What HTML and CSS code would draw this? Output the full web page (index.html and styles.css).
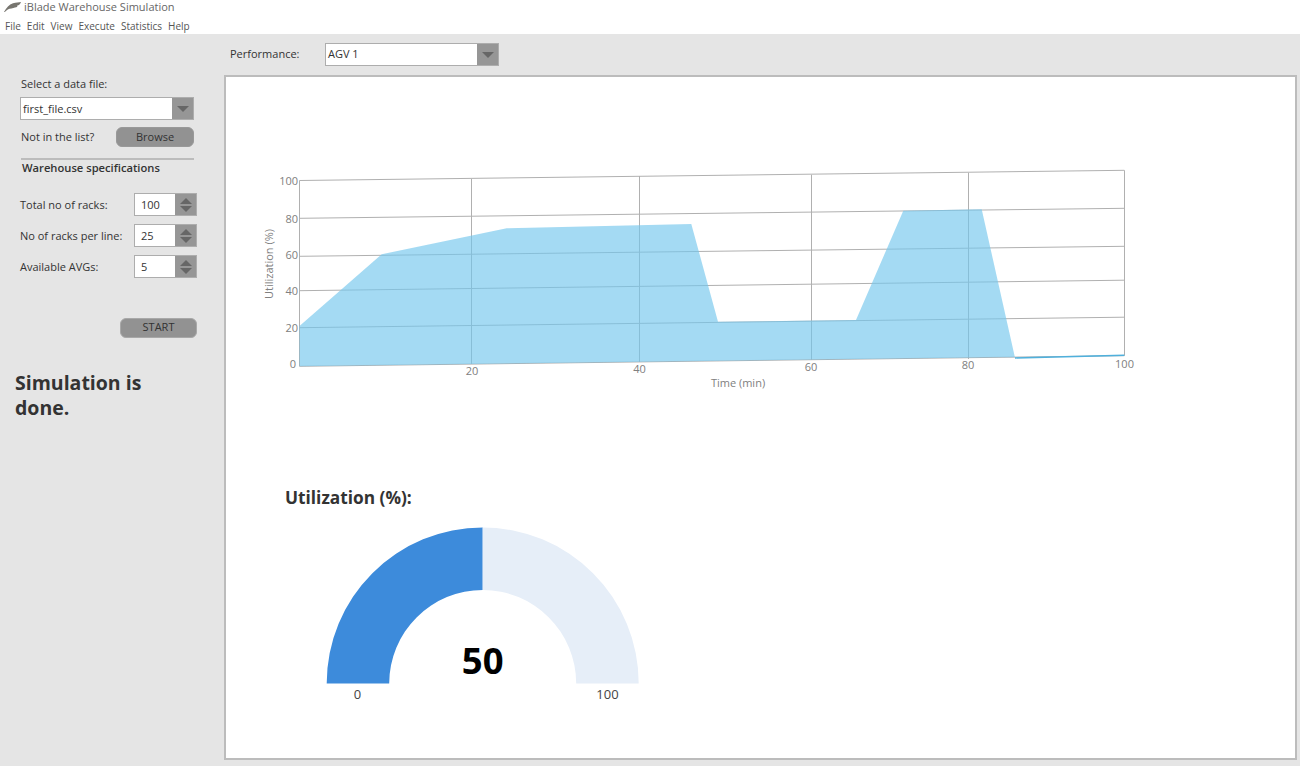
FILE: index.html
```html
<!DOCTYPE html>
<html lang="en">
<head>
    <meta charset="UTF-8">
    <meta name="viewport" content="width=device-width, initial-scale=1.0">
    <title>iBlade Warehouse Simulation</title>
    <link rel="stylesheet" href="styles.css">
</head>
<body>
    <header class="title-bar">
        <svg class="app-logo" width="17" height="10" viewBox="0 0 17 10">
            <path d="M0 10 C2.5 5.5 5 2.5 9 1.2 C12 .3 15 .5 17 0 C16.5 2 15 3.2 13 3.7 C14 4.2 13 5.4 11 5.6 C9 6.6 6 6.6 3.8 7.4 C2.6 8.2 1.6 9 .9 10 Z" fill="#77756f"/>
        </svg>
        <span>iBlade Warehouse Simulation</span>
    </header>
    <nav class="menu-bar">
        <span>File</span>
        <span>Edit</span>
        <span>View</span>
        <span>Execute</span>
        <span>Statistics</span>
        <span>Help</span>
    </nav>

    <div class="workspace">
        <aside class="sidebar">
            <div class="field-label">Select a data file:</div>
            <div class="combo file-combo">
                <span class="combo-value">first_file.csv</span>
                <span class="combo-arrow"><i class="tri-down"></i></span>
            </div>
            <div class="browse-row">
                <span>Not in the list?</span>
                <button class="grey-button browse-button">Browse</button>
            </div>
            <div class="spec-title">Warehouse specifications</div>

            <div class="spec-row">
                <span>Total no of racks:</span>
                <div class="spinner">
                    <span class="spinner-value">100</span>
                    <span class="spinner-arrows"><i class="tri-up"></i><i class="tri-down"></i></span>
                </div>
            </div>
            <div class="spec-row">
                <span>No of racks per line:</span>
                <div class="spinner">
                    <span class="spinner-value">25</span>
                    <span class="spinner-arrows"><i class="tri-up"></i><i class="tri-down"></i></span>
                </div>
            </div>
            <div class="spec-row">
                <span>Available AVGs:</span>
                <div class="spinner">
                    <span class="spinner-value">5</span>
                    <span class="spinner-arrows"><i class="tri-up"></i><i class="tri-down"></i></span>
                </div>
            </div>

            <div class="start-row">
                <button class="grey-button start-button">START</button>
            </div>
            <div class="status-text">Simulation is done.</div>
        </aside>

        <main class="main-area">
            <div class="performance-bar">
                <span class="performance-label">Performance:</span>
                <div class="combo agv-combo">
                    <span class="combo-value">AGV 1</span>
                    <span class="combo-arrow"><i class="tri-down"></i></span>
                </div>
            </div>

            <section class="chart-panel">
                <svg class="area-chart" width="900" height="240" viewBox="255 160 900 240">
                    <g class="grid-lines">
                        <line x1="299.5" y1="180.5" x2="1124.3" y2="170.3"/>
                        <line x1="299.5" y1="218.3" x2="1124.3" y2="208.3"/>
                        <line x1="299.5" y1="256.3" x2="1124.3" y2="246.3"/>
                        <line x1="299.5" y1="290.7" x2="1124.3" y2="280.2"/>
                        <line x1="299.5" y1="327.7" x2="1124.3" y2="317.2"/>
                        <line x1="299.5" y1="366.3" x2="1124.3" y2="355.7"/>
                        <line x1="299.5" y1="180.5" x2="299.5" y2="366.3"/>
                        <line x1="471.5" y1="179" x2="471.5" y2="364"/>
                        <line x1="639.5" y1="176" x2="639.5" y2="362"/>
                        <line x1="811.5" y1="174.7" x2="811.5" y2="360"/>
                        <line x1="968.5" y1="172.7" x2="968.5" y2="359"/>
                        <line x1="1124.5" y1="170.3" x2="1124.5" y2="355.7"/>
                    </g>
                    <polygon class="area-fill" points="299.5,366.3 299.5,326 381.7,254.3 506.7,228.3 691.3,224 718,321.7 856,320 903.3,210.7 981.7,209.3 1015,357.7 1124.3,355 1124.3,355.7"/>
                    <line class="area-edge" x1="1015" y1="358" x2="1124.3" y2="355.2"/>
                    <g class="axis-text">
                        <text x="298" y="185" text-anchor="end">100</text>
                        <text x="298" y="223" text-anchor="end">80</text>
                        <text x="298" y="259" text-anchor="end">60</text>
                        <text x="298" y="295" text-anchor="end">40</text>
                        <text x="298" y="332" text-anchor="end">20</text>
                        <text x="296" y="368" text-anchor="end">0</text>
                        <text x="472" y="375" text-anchor="middle">20</text>
                        <text x="639.5" y="373" text-anchor="middle">40</text>
                        <text x="811" y="371" text-anchor="middle">60</text>
                        <text x="968" y="369" text-anchor="middle">80</text>
                        <text x="1124.5" y="368" text-anchor="middle">100</text>
                        <text x="738" y="387" text-anchor="middle">Time (min)</text>
                        <text transform="translate(273 264) rotate(-90)" text-anchor="middle">Utilization (%)</text>
                    </g>
                </svg>

                <h2 class="gauge-title">Utilization (%):</h2>

                <svg class="gauge" width="330" height="190" viewBox="320 520 330 190">
                    <path d="M326.7 683.5 A156 156 0 0 1 482.7 527.5 V590 A93.5 93.5 0 0 0 389.2 683.5 Z" fill="#3d8bdb"/>
                    <path d="M482.7 527.5 A156 156 0 0 1 638.7 683.5 H576.2 A93.5 93.5 0 0 0 482.7 590 Z" fill="#e6eef8"/>
                    <text class="gauge-value" x="482.7" y="674" text-anchor="middle">50</text>
                    <text class="gauge-limit" x="357.5" y="699" text-anchor="middle">0</text>
                    <text class="gauge-limit" x="607.5" y="699" text-anchor="middle">100</text>
                </svg>
            </section>
        </main>
    </div>
</body>
</html>
```
FILE: styles.css
```css
html, body {
    height: 100%;
}
body {
    font-family: "Open Sans", "Noto Sans", sans-serif;
    font-size: 11px;
    margin: 0;
    padding: 0;
    display: flex;
    flex-direction: column;
    height: 100vh;
    overflow: hidden;
    background-color: #e5e5e5;
    color: #333;
}

.title-bar {
    height: 14px;
    background-color: white;
    display: flex;
    align-items: center;
    padding: 0 0 1px 4px;
    box-sizing: border-box;
    font-size: 11px;
    color: #666;
}
.app-logo {
    margin-right: 3px;
}
.menu-bar {
    height: 20px;
    background-color: white;
    display: flex;
    align-items: center;
    gap: 6px;
    padding: 4px 0 0 5px;
    box-sizing: border-box;
    font-size: 10px;
    color: #555;
}

.workspace {
    flex-grow: 1;
    display: flex;
    min-height: 0;
}

/* Left column */
.sidebar {
    width: 224px;
    flex-shrink: 0;
    box-sizing: border-box;
    padding: 42px 0 0 20px;
}
.field-label {
    height: 15px;
    line-height: 15px;
    padding-left: 1px;
}

.combo {
    display: flex;
    background-color: white;
    border: 1px solid #adadad;
    box-sizing: border-box;
    height: 23px;
}
.combo-value {
    flex-grow: 1;
    line-height: 21px;
    padding-left: 2px;
}
.combo-arrow {
    width: 21px;
    background-color: #969696;
    display: flex;
    align-items: center;
    justify-content: center;
}
.file-combo {
    width: 174px;
    margin-top: 6px;
}

.tri-down, .tri-up {
    display: block;
    width: 0;
    height: 0;
    border-left: 6px solid transparent;
    border-right: 6px solid transparent;
}
.tri-down {
    border-top: 6px solid #666;
}
.tri-up {
    border-bottom: 6px solid #666;
}

.grey-button {
    font-family: inherit;
    font-size: 11px;
    color: #333;
    background-color: #929292;
    border: 1px solid #999;
    border-radius: 6px;
    padding: 0 0 2px;
}
.browse-row {
    width: 174px;
    display: flex;
    justify-content: space-between;
    align-items: center;
    margin-top: 7px;
    padding-left: 1px;
    box-sizing: border-box;
}
.browse-row span {
    margin-bottom: 2px;
}
.browse-button {
    width: 78px;
    height: 20px;
}

.spec-title {
    width: 173px;
    margin: 11px 0 0 1px;
    border-top: 2px solid #bcbcbc;
    padding: 0 0 0 1px;
    box-sizing: border-box;
    height: 35px;
    font-size: 11.2px;
    font-weight: 600;
    line-height: 15px;
}

.spec-row {
    width: 177px;
    height: 23px;
    margin-bottom: 8px;
    display: flex;
    justify-content: space-between;
    align-items: center;
}
.spinner {
    width: 63px;
    height: 23px;
    box-sizing: border-box;
    border: 1px solid #adadad;
    background-color: white;
    display: flex;
}
.spinner-value {
    flex-grow: 1;
    line-height: 21px;
    padding-left: 6px;
}
.spinner-arrows {
    width: 21px;
    background-color: #969696;
    display: flex;
    flex-direction: column;
    align-items: center;
    justify-content: center;
    gap: 2px;
}

.start-row {
    width: 177px;
    display: flex;
    justify-content: flex-end;
    margin-top: 40px;
}
.start-button {
    width: 77px;
    height: 20px;
    padding-bottom: 4px;
    border-color: #a8a8a8;
}
.status-text {
    width: 150px;
    margin: 32px 0 0 -5px;
    font-size: 19.5px;
    line-height: 25px;
    font-weight: 700;
    color: #333;
}

/* Right column */
.main-area {
    flex-grow: 1;
    min-width: 0;
    display: flex;
    flex-direction: column;
}
.performance-bar {
    height: 41px;
    flex-shrink: 0;
    display: flex;
    align-items: flex-start;
    padding: 9px 0 0 6px;
    box-sizing: border-box;
}
.performance-label {
    width: 95px;
    line-height: 21px;
}
.agv-combo {
    width: 174px;
}
.agv-combo .combo-value {
    line-height: 19px;
}

.chart-panel {
    flex-grow: 1;
    margin: 0 3px 6px 0;
    background-color: white;
    border: 2px solid #bcbcbc;
    min-height: 0;
}
.area-chart {
    display: block;
    margin: 83px 0 0 29px;
}
.grid-lines line {
    stroke: #b0b0b0;
    stroke-width: 1;
}
.area-fill {
    fill: #73c6ed;
    opacity: 0.65;
}
.area-edge {
    stroke: #4fb0dc;
    stroke-width: 1.4;
}
.axis-text text {
    font-size: 11px;
    fill: #808080;
}

.gauge-title {
    margin: 0;
    padding: 87px 0 0 59px;
    font-size: 17.3px;
    line-height: 22px;
    font-weight: 700;
    color: #333;
}
.gauge {
    display: block;
    margin: 11px 0 0 94px;
}
.gauge-value {
    font-size: 36.5px;
    font-weight: 700;
    fill: black;
}
.gauge-limit {
    font-size: 13px;
    fill: #444;
}
```
